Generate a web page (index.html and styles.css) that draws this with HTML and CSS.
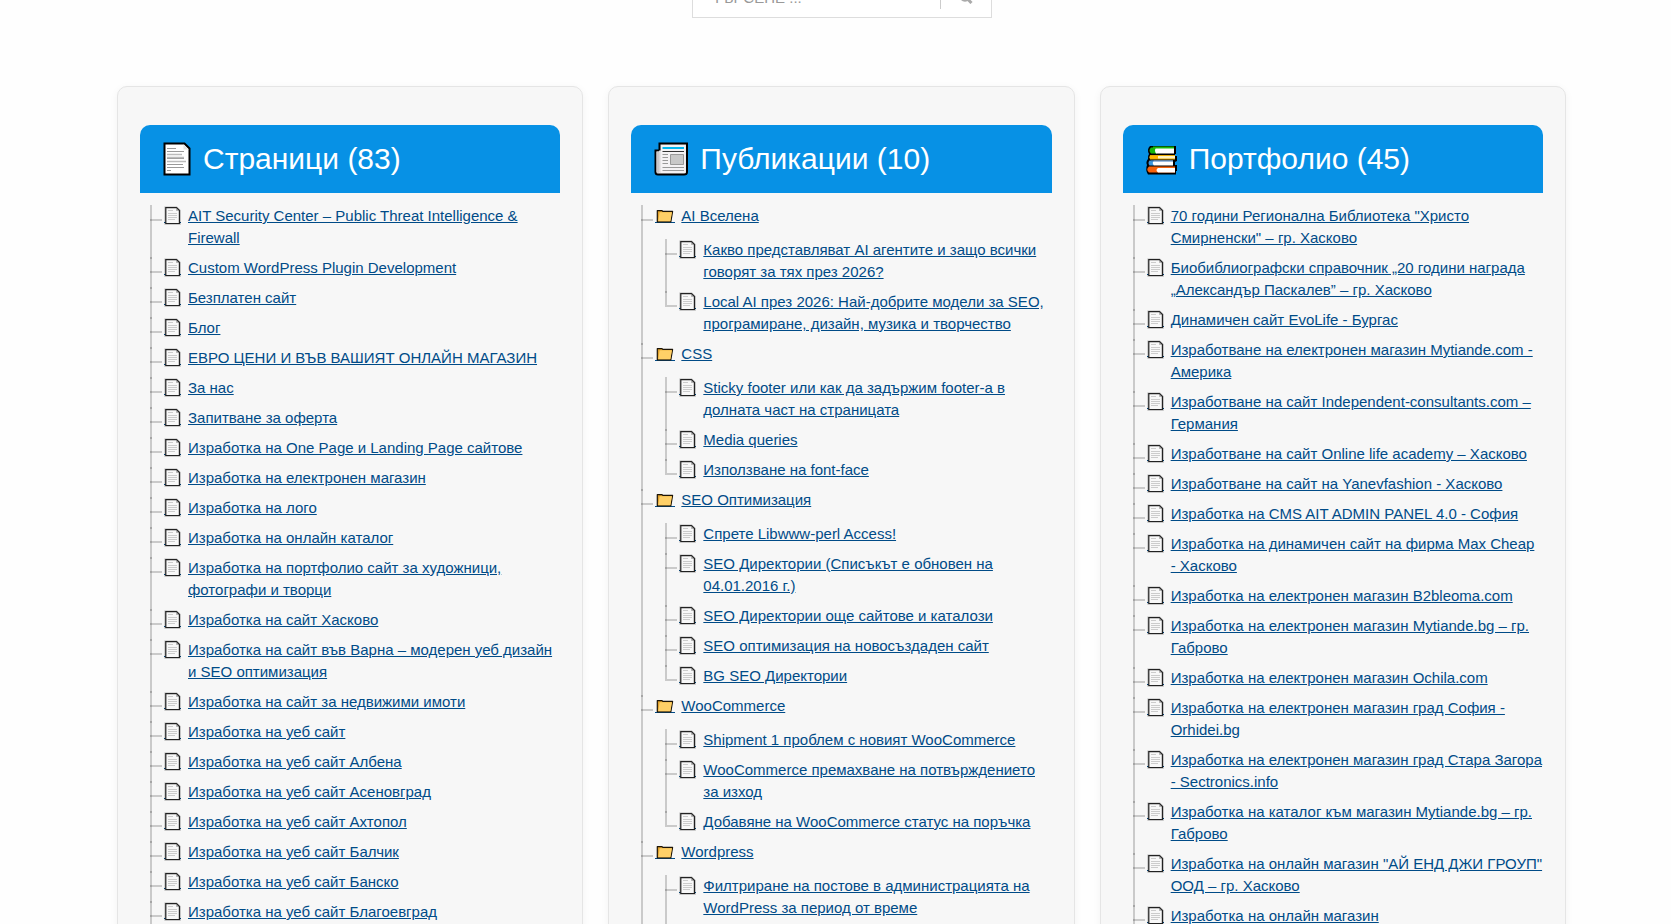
FILE: index.html
```html
<!DOCTYPE html>
<html lang="bg">
  <head>
    <meta charset="UTF-8" />
    <meta name="viewport" content="width=device-width, initial-scale=1.0" />
    <title>Карта на сайта</title>
    <link rel="stylesheet" href="styles.css">
  </head>
  <body>
    <!-- Icons -->
    <svg class="sprite" aria-hidden="true">
      <symbol id="doc" viewBox="0 0 17 22">
        <path d="M0 17.5H17" stroke="#004b87"/>
        <path d="M1.2 2.2H12.6L16 5.6V19H1.2Z" fill="none" stroke="#000" stroke-width="1.6" opacity=".25"/>
        <path d="M1.8 2.6H12.4L15.4 5.6V18.500H1.8Z" fill="#f8f8f8" stroke="#222" stroke-width="1.2"/>
        <path d="M12.500 3V5.500H15" fill="none" stroke="#888" stroke-width=".6"/>
        <path d="M4 5.500H9M4 8.500H13M4 10.500H13M4 12.500H13M4 14.500H11" stroke="#ccc"/>
      </symbol>
      <symbol id="folder" viewBox="0 0 20 22">
        <path d="M0 17.500H20" stroke="#004b87"/>
        <path d="M2.300 16.800V5.600H6.800L8 6.400H17.600L15.800 16.800Z" fill="#e0a02a" stroke="#1c1407" stroke-width="1.200" stroke-linejoin="round"/>
        <path d="M4.600 7.200H17L15.400 16.200H3.200Z" fill="#ffd067"/>
      </symbol>
    </svg>

    <form class="search">
      <input type="search" placeholder="ТЪРСЕНЕ ..." aria-label="Търсене" />
      <button type="submit" aria-label="Търси">
        <svg width="14" height="14" viewBox="0 0 14 14">
          <circle cx="6" cy="6" r="4.5" fill="none" stroke="#aaa" stroke-width="2.4"/>
          <path d="M8.500 9L12.500 13" stroke="#aaa" stroke-width="3"/>
        </svg>
      </button>
    </form>

    <main class="sitemap">
      <!-- Pages -->
      <section class="card">
        <h2>
          <svg width="30" height="36" viewBox="0 0 30 36">
            <path d="M2.5 2.5H22.5L27.5 7.5V33.5H2.5Z" fill="#fff" stroke="#000" stroke-width="2"/>
            <path d="M21.5 3.5V8.5H26.5Z" fill="#e4e4e4"/>
            <path d="M5 7.5H14M5 10.5H22M5 17.5H22M5 23.5H21M5 26.5H22M5 29.5H9" stroke="#999"/>
            <path d="M5 13.5H20M5 16.5H22M5 20.5H24" stroke="#bbb" stroke-width="1.5"/>
          </svg>
          <span>Страници (83)</span>
        </h2>
        <ul class="tree">
          <li><a href="#"><svg class="doc"><use href="#doc"/></svg><span>AIT Security Center – Public Threat Intelligence &amp; Firewall</span></a></li>
          <li><a href="#"><svg class="doc"><use href="#doc"/></svg><span>Custom WordPress Plugin Development</span></a></li>
          <li><a href="#"><svg class="doc"><use href="#doc"/></svg><span>Безплатен сайт</span></a></li>
          <li><a href="#"><svg class="doc"><use href="#doc"/></svg><span>Блог</span></a></li>
          <li><a href="#"><svg class="doc"><use href="#doc"/></svg><span>ЕВРО ЦЕНИ И ВЪВ ВАШИЯТ ОНЛАЙН МАГАЗИН</span></a></li>
          <li><a href="#"><svg class="doc"><use href="#doc"/></svg><span>За нас</span></a></li>
          <li><a href="#"><svg class="doc"><use href="#doc"/></svg><span>Запитване за оферта</span></a></li>
          <li><a href="#"><svg class="doc"><use href="#doc"/></svg><span>Изработка на One Page и Landing Page сайтове</span></a></li>
          <li><a href="#"><svg class="doc"><use href="#doc"/></svg><span>Изработка на електронен магазин</span></a></li>
          <li><a href="#"><svg class="doc"><use href="#doc"/></svg><span>Изработка на лого</span></a></li>
          <li><a href="#"><svg class="doc"><use href="#doc"/></svg><span>Изработка на онлайн каталог</span></a></li>
          <li><a href="#"><svg class="doc"><use href="#doc"/></svg><span>Изработка на портфолио сайт за художници, фотографи и творци</span></a></li>
          <li><a href="#"><svg class="doc"><use href="#doc"/></svg><span>Изработка на сайт Хасково</span></a></li>
          <li><a href="#"><svg class="doc"><use href="#doc"/></svg><span>Изработка на сайт във Варна – модерен уеб дизайн и SEO оптимизация</span></a></li>
          <li><a href="#"><svg class="doc"><use href="#doc"/></svg><span>Изработка на сайт за недвижими имоти</span></a></li>
          <li><a href="#"><svg class="doc"><use href="#doc"/></svg><span>Изработка на уеб сайт</span></a></li>
          <li><a href="#"><svg class="doc"><use href="#doc"/></svg><span>Изработка на уеб сайт Албена</span></a></li>
          <li><a href="#"><svg class="doc"><use href="#doc"/></svg><span>Изработка на уеб сайт Асеновград</span></a></li>
          <li><a href="#"><svg class="doc"><use href="#doc"/></svg><span>Изработка на уеб сайт Ахтопол</span></a></li>
          <li><a href="#"><svg class="doc"><use href="#doc"/></svg><span>Изработка на уеб сайт Балчик</span></a></li>
          <li><a href="#"><svg class="doc"><use href="#doc"/></svg><span>Изработка на уеб сайт Банско</span></a></li>
          <li><a href="#"><svg class="doc"><use href="#doc"/></svg><span>Изработка на уеб сайт Благоевград</span></a></li>
        </ul>
      </section>

      <!-- Posts -->
      <section class="card">
        <h2>
          <svg width="36" height="36" viewBox="0 0 36 36">
            <path d="M6 9.5H2.5V31Q2.5 33.5 5 33.5H31Q34 33.5 34 31V2.5H6.5V9.5" fill="#e6e4e6" stroke="#000" stroke-width="2"/>
            <path d="M3.5 10.500H6.500V31Q5 33 3.500 31Z" fill="#c9c7c9"/>
            <path d="M8 4H32.500V32H8Z" fill="#f4f2f4"/>
            <path d="M9.500 7H31" stroke="#00b7f0" stroke-width="2"/>
            <path d="M9.500 10.500H31" stroke="#333"/>
            <path d="M17.500 13.500H30.500V23.500H17.500Z" fill="#c8c8c8" stroke="#999"/>
            <path d="M9.500 13.500H15M9.500 16.500H15M9.500 19.500H15M9.500 22.500H15M9.500 26.500H31M9.500 29.500H31" stroke="#999"/>
          </svg>
          <span>Публикации (10)</span>
        </h2>
        <ul class="tree">
          <li>
            <a href="#"><svg class="folder"><use href="#folder"/></svg><span>AI Вселена</span></a>
            <ul>
              <li><a href="#"><svg class="doc"><use href="#doc"/></svg><span>Какво представляват AI агентите и защо всички говорят за тях през 2026?</span></a></li>
              <li class="end"><a href="#"><svg class="doc"><use href="#doc"/></svg><span>Local AI през 2026: Най-добрите модели за SEO, програмиране, дизайн, музика и творчество</span></a></li>
            </ul>
          </li>
          <li>
            <a href="#"><svg class="folder"><use href="#folder"/></svg><span>CSS</span></a>
            <ul>
              <li><a href="#"><svg class="doc"><use href="#doc"/></svg><span>Sticky footer или как да задържим footer-а в долната част на страницата</span></a></li>
              <li><a href="#"><svg class="doc"><use href="#doc"/></svg><span>Media queries</span></a></li>
              <li class="end"><a href="#"><svg class="doc"><use href="#doc"/></svg><span>Използване на font-face</span></a></li>
            </ul>
          </li>
          <li>
            <a href="#"><svg class="folder"><use href="#folder"/></svg><span>SEO Оптимизация</span></a>
            <ul>
              <li><a href="#"><svg class="doc"><use href="#doc"/></svg><span>Спрете Libwww-perl Access!</span></a></li>
              <li><a href="#"><svg class="doc"><use href="#doc"/></svg><span>SEO Директории (Списъкът е обновен на 04.01.2016 г.)</span></a></li>
              <li><a href="#"><svg class="doc"><use href="#doc"/></svg><span>SEO Директории още сайтове и каталози</span></a></li>
              <li><a href="#"><svg class="doc"><use href="#doc"/></svg><span>SEO оптимизация на новосъздаден сайт</span></a></li>
              <li class="end"><a href="#"><svg class="doc"><use href="#doc"/></svg><span>BG SEO Директории</span></a></li>
            </ul>
          </li>
          <li>
            <a href="#"><svg class="folder"><use href="#folder"/></svg><span>WooCommerce</span></a>
            <ul>
              <li><a href="#"><svg class="doc"><use href="#doc"/></svg><span>Shipment 1 проблем с новият WooCommerce</span></a></li>
              <li><a href="#"><svg class="doc"><use href="#doc"/></svg><span>WooCommerce премахване на потвърждението за изход</span></a></li>
              <li class="end"><a href="#"><svg class="doc"><use href="#doc"/></svg><span>Добавяне на WooCommerce статус на поръчка</span></a></li>
            </ul>
          </li>
          <li>
            <a href="#"><svg class="folder"><use href="#folder"/></svg><span>Wordpress</span></a>
            <ul>
              <li><a href="#"><svg class="doc"><use href="#doc"/></svg><span>Филтриране на постове в администрацията на WordPress за период от време</span></a></li>
            </ul>
          </li>
        </ul>
      </section>

      <!-- Portfolio -->
      <section class="card">
        <h2>
          <svg width="33" height="36" viewBox="0 0 33 36">
            <path d="M5 5Q1.500 8.500 4 13Q2.500 15 3 18Q.500 21 2 24Q0 29 3 33.500H31V30H32V24H30V21L32 20V15H30V13H31V5Z" fill="#000"/>
            <path d="M12 6.500H6Q3 9.500 6 12.500H12Z" fill="#16b80c"/>
            <path d="M11 6.500H29V12.500H11Q9 9.500 11 6.500Z" fill="#fff"/>
            <path d="M8 6.500H29" stroke="#16b80c" stroke-width="2"/>
            <path d="M5 14.500H13V18H5Q3.500 16 5 14.500Z" fill="#ffb900"/>
            <path d="M13 14.500H30V18H13Z" fill="#fff3c0"/>
            <path d="M5 14.500H30M5 18H30" stroke="#e8a800"/>
            <path d="M9 19.500H4.500Q2.500 22 4.500 24.500H9Z" fill="#3a96dd"/>
            <path d="M9 19.500H28V24.500H9Q6.500 22 9 19.500Z" fill="#fff"/>
            <path d="M6 20H28" stroke="#3a78bd" stroke-width="1"/>
            <path d="M4 25.500H30V31.500H4Q.500 28.500 4 25.500Z" fill="#f7630c"/>
            <path d="M13 27H30V31.500H13Q10 29 13 27Z" fill="#fff"/>
          </svg>
          <span>Портфолио (45)</span>
        </h2>
        <ul class="tree">
          <li><a href="#"><svg class="doc"><use href="#doc"/></svg><span>70 години Регионална Библиотека "Христо Смирненски" – гр. Хасково</span></a></li>
          <li><a href="#"><svg class="doc"><use href="#doc"/></svg><span>Биобиблиографски справочник „20 години награда „Александър Паскалев” – гр. Хасково</span></a></li>
          <li><a href="#"><svg class="doc"><use href="#doc"/></svg><span>Динамичен сайт EvoLife - Бургас</span></a></li>
          <li><a href="#"><svg class="doc"><use href="#doc"/></svg><span>Изработване на електронен магазин Mytiande.com - Америка</span></a></li>
          <li><a href="#"><svg class="doc"><use href="#doc"/></svg><span>Изработване на сайт Independent-consultants.com – Германия</span></a></li>
          <li><a href="#"><svg class="doc"><use href="#doc"/></svg><span>Изработване на сайт Online life academy – Хасково</span></a></li>
          <li><a href="#"><svg class="doc"><use href="#doc"/></svg><span>Изработване на сайт на Yanevfashion - Хасково</span></a></li>
          <li><a href="#"><svg class="doc"><use href="#doc"/></svg><span>Изработка на CMS AIT ADMIN PANEL 4.0 - София</span></a></li>
          <li><a href="#"><svg class="doc"><use href="#doc"/></svg><span>Изработка на динамичен сайт на фирма Max Cheap - Хасково</span></a></li>
          <li><a href="#"><svg class="doc"><use href="#doc"/></svg><span>Изработка на електронен магазин B2bleoma.com</span></a></li>
          <li><a href="#"><svg class="doc"><use href="#doc"/></svg><span>Изработка на електронен магазин Mytiande.bg – гр. Габрово</span></a></li>
          <li><a href="#"><svg class="doc"><use href="#doc"/></svg><span>Изработка на електронен магазин Ochila.com</span></a></li>
          <li><a href="#"><svg class="doc"><use href="#doc"/></svg><span>Изработка на електронен магазин град София - Orhidei.bg</span></a></li>
          <li><a href="#"><svg class="doc"><use href="#doc"/></svg><span>Изработка на електронен магазин град Стара Загора - Sectronics.info</span></a></li>
          <li><a href="#"><svg class="doc"><use href="#doc"/></svg><span>Изработка на каталог към магазин Mytiande.bg – гр. Габрово</span></a></li>
          <li><a href="#"><svg class="doc"><use href="#doc"/></svg><span>Изработка на онлайн магазин "АЙ ЕНД ДЖИ ГРОУП" ООД – гр. Хасково</span></a></li>
          <li><a href="#"><svg class="doc"><use href="#doc"/></svg><span>Изработка на онлайн магазин</span></a></li>
        </ul>
      </section>
    </main>
  </body>
</html>
```
FILE: styles.css
```css
:root {
  --header-color: #0791e5;
  --link-color: #004b87;
  --line-color: rgba(0, 0, 0, 0.18);
  --border-radius: 10px;
}

* {
  box-sizing: border-box;
}

body {
  margin: 0;
  padding: 0 105px 0 117px;
  font-family: Arial, "Liberation Sans", sans-serif;
  font-size: 15px;
  line-height: 22px;
  background: #fefefe;
}

.sprite {
  display: none;
}

/* Search sits half under the top edge of the page */
.search {
  display: flex;
  width: 300px;
  height: 40px;
  margin: -22px auto 68px;
  border: 1px solid #ddd;
  background: #fff;
}

.search input {
  flex: 1;
  min-width: 0;
  padding: 0 20px;
  border: none;
  outline: none;
  background: none;
  font: inherit;
  appearance: none;
}

.search input::placeholder {
  color: #999;
  opacity: 1;
}

.search button {
  width: 51px;
  margin: 8px 0;
  padding: 0;
  border: none;
  border-left: 1px solid #ccc;
  background: none;
  cursor: pointer;
}

.sitemap {
  display: grid;
  grid-template-columns: repeat(3, minmax(0, 1fr));
  gap: 25px;
}

.card {
  padding: 38px 22px 22px;
  border: 1px solid #e5e5e5;
  border-radius: var(--border-radius);
  background: #f7f7f7;
  box-shadow: 0 2px 8px rgba(0, 0, 0, 0.05);
}

h2 {
  display: flex;
  align-items: center;
  gap: 11px;
  margin: 0 0 12px;
  padding: 15px 22px;
  border-radius: var(--border-radius) var(--border-radius) 0 0;
  background: var(--header-color);
  color: #fff;
  font-size: 30px;
  font-weight: 400;
  line-height: 38px;
}

.tree,
.tree ul {
  margin: 0;
  padding: 0;
  list-style: none;
}

.tree {
  padding-left: 10px;
}

.tree ul {
  padding: 4px 0 0 10px;
}

.tree li {
  position: relative;
  padding-left: 14px;
}

/* Branch lines */
.tree li::before,
.tree li::after {
  content: "";
  position: absolute;
  left: 0;
  background: var(--line-color);
}

.tree li::before {
  top: 0;
  bottom: -2px;
  width: 2px;
}

.tree li::after {
  top: 14px;
  width: 12px;
  height: 2px;
}

.tree li.end::before {
  bottom: auto;
  height: 14px;
}

.tree a {
  display: flex;
  padding-bottom: 8px;
  color: var(--link-color);
}

.tree svg {
  flex: none;
  height: 22px;
}

.tree .doc {
  width: 17px;
  margin-right: 7px;
}

.tree .folder {
  width: 20px;
  margin-right: 6px;
}

a:hover {
  color: var(--header-color);
}
```
